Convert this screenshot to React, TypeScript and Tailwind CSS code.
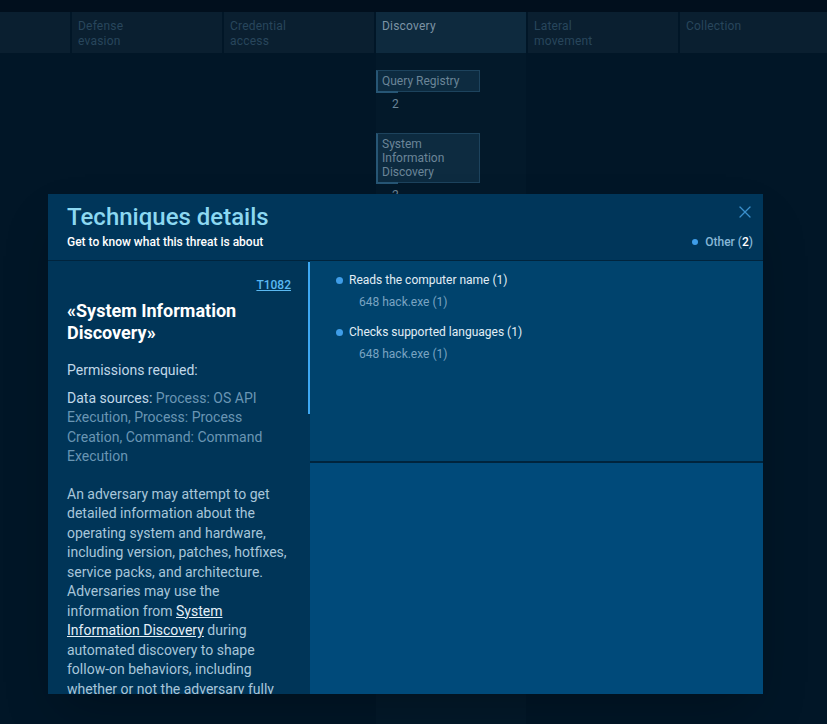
import { X } from 'lucide-react';

const tactics = [
  { name: 'Defense evasion', active: false },
  { name: 'Credential access', active: false },
  { name: 'Discovery', active: true },
  { name: 'Lateral movement', active: false },
  { name: 'Collection', active: false },
];

const behaviors = [
  { title: 'Reads the computer name (1)', process: '648 hack.exe (1)' },
  { title: 'Checks supported languages (1)', process: '648 hack.exe (1)' },
];

function TechniqueCard({ label, count }: { label: string; count: number }) {
  return (
    <div className="flex flex-col">
      <div className="relative w-[104px] border border-[#1d435d] border-l-2 border-l-[#275675] bg-[#0d2b40] px-[4px] py-[3px] text-[12px] leading-[14px] text-[#6b8598]">
        {label}
        <span className="absolute -bottom-[2px] -left-[2px] h-[2px] w-[22px] bg-[#275675]" />
      </div>
      <span className="pl-[16px] pt-[5px] text-[12px] leading-[14px] text-[#6b8598]">{count}</span>
    </div>
  );
}

export default function App() {
  return (
    <div className="relative h-[724px] w-[827px] overflow-hidden bg-[#011627] font-['Roboto',sans-serif]">
      <div className="h-[12px] bg-[#010f1d]" />

      {/* tactics header row */}
      <div className="flex gap-[2px]">
        <div className="h-[41px] w-[70px] shrink-0 bg-[#0a1f30]" />
        {tactics.map((t) => (
          <div
            key={t.name}
            className={`h-[41px] w-[150px] shrink-0 px-[6px] pt-[7px] text-[12px] leading-[15px] tracking-[0.2px] ${
              t.active ? 'bg-[#0e2a3e] text-[#7c93a4]' : 'bg-[#0a1f30] text-[#28465c]'
            }`}
          >
            <div className="w-[80px]">{t.name}</div>
          </div>
        ))}
      </div>

      {/* columns body */}
      <div className="flex h-[671px] gap-[2px]">
        <div className="w-[70px] shrink-0" />
        <div className="w-[150px] shrink-0" />
        <div className="w-[150px] shrink-0" />
        <div className="flex w-[150px] shrink-0 flex-col gap-[22px] bg-[#03192a] pt-[17px]">
          <TechniqueCard label="Query Registry" count={2} />
          <TechniqueCard label="System Information Discovery" count={2} />
        </div>
      </div>

      {/* modal */}
      <div className="absolute left-[48px] top-[194px] flex h-[500px] w-[715px] flex-col shadow-2xl">
        <div className="relative flex h-[67px] shrink-0 items-end justify-between border-b border-[#00243d] bg-[#00365a] pb-[11px] pl-[19px] pr-[10px]">
          <div>
            <h2 className="text-[24px] font-medium leading-[28px] text-[#8cd8f1]">Techniques details</h2>
            <p className="mt-[4px] text-[12px] font-medium leading-[14px] text-white">Get to know what this threat is about</p>
          </div>
          <div className="flex items-center gap-[7px] text-[12px] font-medium leading-[14px] text-[#86b6d6]">
            <span className="h-[6px] w-[6px] rounded-full bg-[#3f9de8]" />
            <span>
              Other (<span className="text-white">2</span>)
            </span>
          </div>
          <button className="absolute right-[8px] top-[8px] text-[#3a8fca]">
            <X className="h-[20px] w-[20px]" strokeWidth={1.5} />
          </button>
        </div>

        <div className="flex min-h-0 flex-1">
          {/* left description panel */}
          <div className="relative w-[262px] shrink-0 overflow-hidden bg-[#003558] pl-[19px] pr-[19px] pt-[11px]">
            <div className="text-right">
              <a className="text-[12px] font-medium leading-[14px] text-[#5bb9f2] underline">T1082</a>
            </div>
            <h3 className="mt-[4px] text-[18px] font-bold leading-[22px] text-white">«System Information Discovery»</h3>
            <p className="mt-[17px] text-[14px] leading-[19.5px] text-[#c0d8e8]">Permissions requied:</p>
            <p className="mt-[8px] text-[14px] leading-[19.5px] text-[#6a96b4]">
              <span className="text-[#c0d8e8]">Data sources: </span>
              Process: OS API Execution, Process: Process Creation, Command: Command Execution
            </p>
            <p className="mt-[18px] text-[14px] leading-[19.5px] text-[#a8c6da]">
              An adversary may attempt to get detailed information about the operating system and hardware,
              including version, patches, hotfixes, service packs, and architecture. Adversaries may use the
              information from <a className="text-[#e4f0f8] underline">System Information Discovery</a> during
              automated discovery to shape follow-on behaviors, including whether or not the adversary fully
              infects the target and/or attempts specific actions.
            </p>
            <div className="absolute right-0 top-[1px] h-[152px] w-[2px] bg-[#3ea8f2]" />
          </div>

          {/* right behaviors panel */}
          <div className="flex flex-1 flex-col">
            <div className="h-[202px] shrink-0 border-b-2 border-[#00243d] bg-[#00436d] pl-[26px] pt-[12px]">
              {behaviors.map((b) => (
                <div key={b.title} className="mb-[16px]">
                  <div className="flex items-center gap-[6px] text-[12px] leading-[14px] text-[#e2eef6]">
                    <span className="h-[7px] w-[7px] rounded-full bg-[#3f9de8]" />
                    {b.title}
                  </div>
                  <div className="mt-[8px] pl-[23px] text-[12px] leading-[14px] text-[#7aa4c2]">{b.process}</div>
                </div>
              ))}
            </div>
            <div className="flex-1 bg-[#004a7a]" />
          </div>
        </div>
      </div>
    </div>
  );
}
